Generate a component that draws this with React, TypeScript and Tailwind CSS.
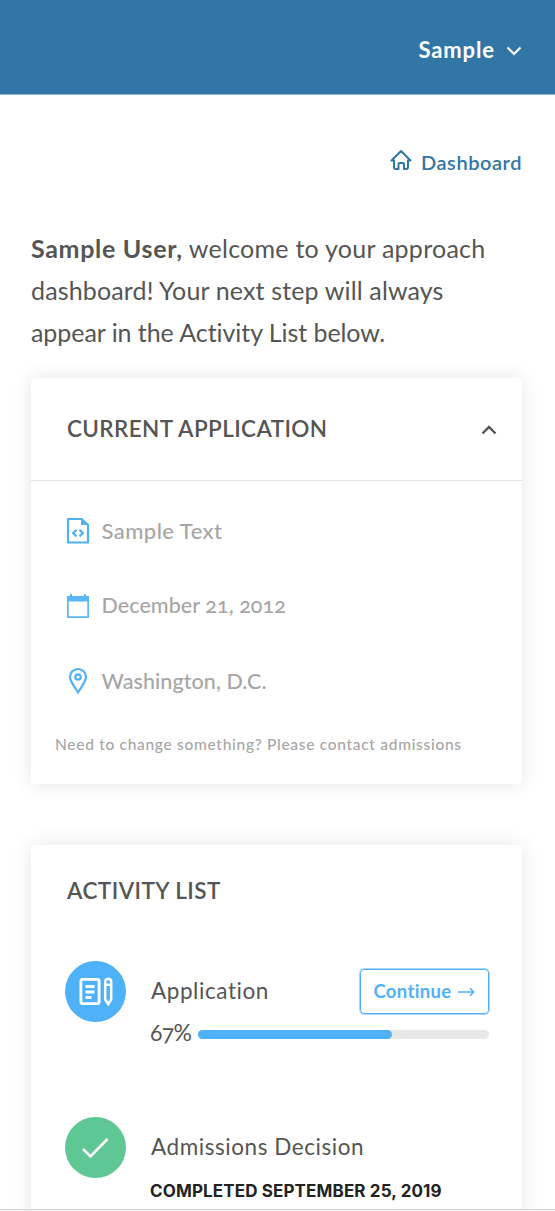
import type { ReactNode } from "react";

function Detail({ icon, children }: { icon: ReactNode; children: ReactNode }) {
  return (
    <div className="flex h-[75px] items-center">
      <span className="flex w-[35.500px] shrink-0">{icon}</span>
      {children}
    </div>
  );
}

const FileIcon = () => (
  <svg width="24" height="28" viewBox="0 0 24 28" fill="none" stroke="#4fb2f8" strokeWidth="2.200">
    <path d="M2 2h13.5L22 8v17.5H2z" strokeLinejoin="round" />
    <path d="M15 1.5h1L22.5 8H15z" fill="#4fb2f8" stroke="none" />
    <path d="m10.500 12.800-3.400 3.300 3.400 3.300M13.500 12.800l3.400 3.300-3.400 3.300" />
  </svg>
);

const CalendarIcon = () => (
  <svg width="24" height="26" viewBox="0 0 24 26" fill="#5bb6f9">
    <path d="M1 3h3V1h2v2h12V1h2v2h3v22H1zM2.7 8.5v14.8h18.6V8.5z" fillRule="evenodd" />
  </svg>
);

const PinIcon = () => (
  <svg width="24" height="28" viewBox="0 0 24 28" fill="none" stroke="#4fb2f8" strokeWidth="2.200">
    <path d="M12 25.500C9.500 21 4 14.500 4 10a8 8 0 0 1 16 0c0 4.500-5.500 11-8 15.500z" />
    <circle cx="12" cy="10" r="2.700" />
  </svg>
);

export default function App() {
  return (
    <div className="flex h-[1211px] w-[555px] flex-col overflow-hidden bg-white font-['Lato',sans-serif] text-[#555]">
      <header className="flex h-[95px] shrink-0 items-center justify-end border-b border-[#93b6d0] bg-[#3276a6] pr-[33px] pt-[4px] text-[22px] font-bold text-white">
        <span className="tracking-[0.9px]">Sample</span>
        <svg className="ml-[11px] mt-[4px]" width="16" height="10" viewBox="0 0 16 10" fill="none" stroke="white" strokeWidth="2.200">
          <path d="m1.500 1.500 6.500 6.500 6.500-6.500" />
        </svg>
      </header>

      <main className="flex min-h-0 flex-1 flex-col overflow-hidden pl-[31px] pr-[33.500px]">
        <nav className="mt-[49px] flex h-9 shrink-0 items-center justify-end text-[20px] font-semibold text-[#3276a6]">
          <svg className="mb-[5px] mr-[9px]" width="22" height="22" viewBox="0 0 22 22" fill="none" stroke="#3276a6" strokeWidth="2" strokeLinejoin="round" strokeLinecap="round">
            <path d="M1.500 11.500 11 2l9.500 9.500H18V18q0 2-2 2h-2v-5q0-1-1-1H9.500q-1 0-1 1v5H6q-2 0-2-2v-6.500z" />
          </svg>
          <span className="-mr-[0.500px] tracking-[0.550px]">Dashboard</span>
        </nav>

        <p className="mt-[47px] h-[126px] shrink-0 whitespace-nowrap text-[25px] leading-[42px]">
          <b className="tracking-[0.680px]">Sample User,</b>
          <span className="tracking-[0.25px]"> welcome to your approach</span>
          <br />
          <span className="tracking-[0.14px]">dashboard! Your next step will always</span>
          <br />
          <span className="tracking-[-0.060px]">appear in the Activity List below.</span>
        </p>

        <section className="mt-[25px] h-[406px] shrink-0 rounded-[4px] bg-white shadow-[0_0_20px_rgba(0,0,0,0.100)]">
          <div className="flex h-[103px] items-center justify-between border-b border-[#e3e3e3] pl-[36px] pr-[25px]">
            <h2 className="text-[22.500px] font-semibold tracking-[0.390px]">CURRENT APPLICATION</h2>
            <svg className="mt-[2px]" width="16" height="10" viewBox="0 0 16 10" fill="none" stroke="#555" strokeWidth="2.400">
              <path d="m1.500 8.500 6.500-6.500 6.500 6.500" />
            </svg>
          </div>
          <div className="pl-[35px] pt-[12px] font-medium text-[#a6a6a6]">
            <Detail icon={<FileIcon />}><span className="text-[22px] tracking-[0.450px]">Sample Text</span></Detail>
            <Detail icon={<CalendarIcon />}><span className="text-[21.500px] oldstyle-nums tracking-[0.070px]">December 21, 2012</span></Detail>
            <Detail icon={<PinIcon />}><span className="mt-[1px] text-[21.500px] tracking-[0.070px]">Washington, D.C.</span></Detail>
          </div>
          <p className="ml-[24px] mt-[14px] whitespace-nowrap text-[15.500px] font-medium leading-[24px] tracking-[0.700px] text-[#a6a6a6]">Need to change something? Please contact admissions</p>
        </section>

        <section className="mt-[61px] h-[380px] shrink-0 rounded-[4px] bg-white pl-[34px] pr-[33px] pt-[29px] shadow-[0_0_20px_rgba(0,0,0,0.100)]">
          <h2 className="ml-[2px] h-[34px] text-[22.500px] font-semibold leading-[34px] tracking-[0.450px]">ACTIVITY LIST</h2>

          <div className="mt-[53px] flex h-[156px] items-start">
            <div className="flex size-[61px] shrink-0 items-center justify-center rounded-full bg-[#4fb2f8]">
              <svg width="36" height="32" viewBox="0 0 36 32" fill="none" stroke="white" strokeWidth="2.800">
                <rect x="2.900" y="3.400" width="18.200" height="24.200" rx="1.500" />
                <path d="M7.500 10.500h9M7.500 16h9M7.500 21.500h6" />
                <path d="M27.200 6q0-3.300 3-3.300t3 3.300v17.500l-3 4.500-3-4.500zM27 8.700h6.400" strokeWidth="2.500" />
              </svg>
            </div>
            <div className="ml-[24px] flex-1">
              <div className="flex items-center justify-between pt-[8px]">
                <span className="mb-[1px] ml-[1px] text-[22.500px] tracking-[0.570px]">Application</span>
                <button className="flex h-[45px] w-[129px] items-center justify-center gap-[6px] rounded-[4px] border border-[#4fb2f8] text-[18.500px] font-bold text-[#4fb2f8] shadow-[0_0_0_0.500px_#4fb2f8]">
                  <span className="tracking-[0.350px]">Continue</span>
                  <svg width="17" height="10" viewBox="0 0 17 10" fill="none" stroke="#4fb2f8" strokeWidth="1.600">
                    <path d="M0 5h15.500M12 1.300 15.700 5 12 8.700" />
                  </svg>
                </button>
              </div>
              <div className="mt-[2px] flex h-[34px] items-center">
                <span className="mb-[2px] w-[47.500px] text-[23px] oldstyle-nums tracking-[-0.700px]">67%</span>
                <div className="mt-[3px] h-[9px] flex-1 rounded-full bg-[#e8e8e8]">
                  <div className="h-full w-[67%] rounded-full bg-[#4fb2f8]" />
                </div>
              </div>
            </div>
          </div>

          <div className="flex items-start">
            <div className="flex size-[61px] shrink-0 items-center justify-center rounded-full bg-[#5fc795]">
              <svg className="mr-[1px]" width="28" height="22" viewBox="0 0 28 22" fill="none" stroke="white" strokeWidth="2.600">
                <path d="m2 12 7.500 7.500L26.500 2" />
              </svg>
            </div>
            <div className="ml-[24px] whitespace-nowrap">
              <div className="ml-[1px] pt-[13px] text-[22.500px] leading-[34px] tracking-[0.550px]">Admissions Decision</div>
              <div className="mt-[15px] font-['Inter',sans-serif] text-[17px] font-bold leading-[24px] tracking-[0.130px] text-[#222]">COMPLETED SEPTEMBER 25, 2019</div>
            </div>
          </div>
        </section>
      </main>
      <footer className="h-[2px] shrink-0 border-t border-[#d2d2d2] bg-[#f4f4f4]" />
    </div>
  );
}
